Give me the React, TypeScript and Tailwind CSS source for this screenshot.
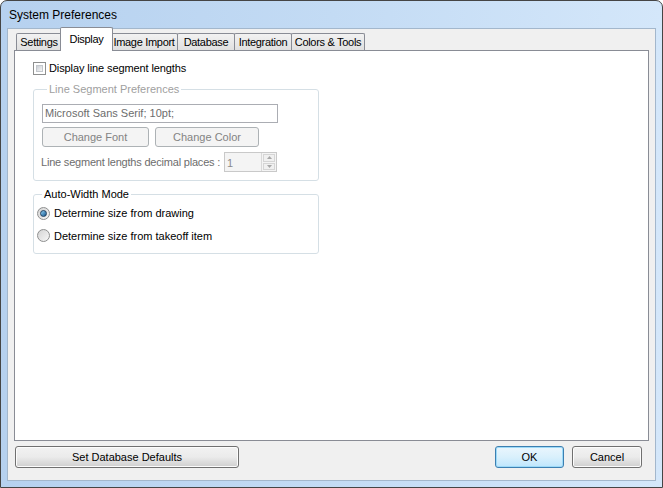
import React from 'react';

const font = { fontFamily: '"Liberation Sans", Arial, sans-serif' };

const tabs = [
  { label: 'Settings', w: 'w-[46px]' },
  { label: 'Display', w: 'w-[47px]' },
  { label: 'Image Import', w: 'w-[68px]' },
  { label: 'Database', w: 'w-[58px]' },
  { label: 'Integration', w: 'w-[58px]' },
  { label: 'Colors & Tools', w: 'w-[74px]' },
];

function Checkbox() {
  return (
    <span className="w-[13px] h-[13px] border border-[#8e8f8f] bg-white p-[2px] shrink-0">
      <span className="block w-full h-full bg-gradient-to-br from-[#cbcfd5] to-[#f6f6f6] border border-[#c3c7cc]" />
    </span>
  );
}

function Radio({ checked }: { checked?: boolean }) {
  return (
    <span className="w-[13px] h-[13px] rounded-full border border-[#8e8f8f] bg-gradient-to-br from-[#d4d4d4] to-[#f7f7f7] flex items-center justify-center shrink-0">
      {checked && (
        <span className="w-[7px] h-[7px] rounded-full bg-gradient-to-br from-[#8fd1f5] to-[#14598f] border border-[#1f3f5f]" />
      )}
    </span>
  );
}

function WinButton({
  children,
  className = '',
  isDefault = false,
  disabled = false,
}: {
  children: React.ReactNode;
  className?: string;
  isDefault?: boolean;
  disabled?: boolean;
}) {
  return (
    <div
      className={`flex items-center justify-center rounded-[3px] border ${
        disabled
          ? 'border-[#adb2b5] bg-[#f4f4f4] text-[#838383]'
          : isDefault
          ? 'border-[#3c7fb1] bg-gradient-to-b from-[#eaf6fd] via-[#d9f0fc] to-[#bee6fd] text-black shadow-[inset_0_0_0_1px_#9ddaf8]'
          : 'border-[#707070] bg-gradient-to-b from-[#f2f2f2] via-[#ebebeb] to-[#cfcfcf] text-black shadow-[inset_0_0_0_1px_#fcfcfc]'
      } ${className}`}
    >
      {children}
    </div>
  );
}

export default function App() {
  return (
    <div
      className="w-[663px] h-[488px] flex flex-col rounded-t-[7px] border border-[#454545] bg-gradient-to-r from-[#b6d1ef] via-[#c3dbf4] to-[#d4e7fa] text-[11px] text-black overflow-hidden"
      style={font}
    >
      {/* title bar */}
      <div className="h-[27px] flex items-center pl-[8px] text-[12px] text-black shrink-0">
        System Preferences
      </div>

      <div className="flex-1 flex flex-col px-[6px] pb-[6px]">
        {/* client area */}
        <div className="flex-1 flex flex-col bg-[#f0f0f0] border border-[#a3b7cc] pt-[2px] pl-[6px] pr-[6px]">
          {/* tab strip */}
          <div className="flex items-end h-[19px] pl-[2px] relative z-10 tracking-[-0.3px]">
            {tabs.map((t) =>
              t.label === 'Display' ? (
                <div
                  key={t.label}
                  className={`${t.w} h-[20px] -mb-px -mx-[2px] px-[2px] box-content bg-white border border-b-0 border-[#898c95] rounded-t-[2px] flex items-start pt-[3px] justify-center relative z-10`}
                >
                  {t.label}
                </div>
              ) : (
                <div
                  key={t.label}
                  className={`${t.w} h-[17px] bg-gradient-to-b from-[#f2f2f2] to-[#e0e0e0] border border-b-0 border-[#898c95] rounded-t-[2px] flex items-center justify-center -ml-px first:ml-0`}
                >
                  {t.label}
                </div>
              )
            )}
          </div>

          {/* tab panel */}
          <div className="h-[391px] bg-white border border-[#898c95] pl-[18px] pt-[11px]">
            <div className="flex items-center gap-[3px] h-[13px] tracking-[-0.1px]">
              <Checkbox />
              <span>Display line segment lengths</span>
            </div>

            <fieldset className="w-[286px] h-[98px] mt-[8px] border border-[#d5dfe5] rounded-[3px] pl-[8px]">
              <legend className="ml-[5px] px-[2px] text-[#a0a0a0] leading-[13px]">
                Line Segment Preferences
              </legend>
              <div className="w-[236px] h-[19px] mt-[8px] border border-[#abadb3] bg-white flex items-center pl-[2px] text-[#6d6d6d]">
                Microsoft Sans Serif; 10pt;
              </div>
              <div className="flex gap-[6px] mt-[4px]">
                <WinButton disabled className="w-[107px] h-[20px]">
                  Change Font
                </WinButton>
                <WinButton disabled className="w-[104px] h-[20px]">
                  Change Color
                </WinButton>
              </div>
              <div className="flex items-center mt-[5px] -ml-[1px]">
                <span className="text-[#6d6d6d] whitespace-nowrap tracking-[-0.2px] w-[183px]">
                  Line segment lengths decimal places :
                </span>
                <div className="w-[53px] h-[20px] border border-[#c9c9c9] bg-[#f4f4f4] flex">
                  <span className="flex-1 pl-[2px] pt-[2px] text-[#8a8a8a]">1</span>
                  <div className="w-[15px] flex flex-col border-l border-[#d9d9d9] p-px gap-px">
                    <div className="flex-1 border border-[#d5d5d5] bg-[#f0f0f0] flex items-center justify-center">
                      <svg width="5" height="3" viewBox="0 0 5 3">
                        <path d="M0 3 L2.5 0 L5 3 Z" fill="#a7a7a7" />
                      </svg>
                    </div>
                    <div className="flex-1 border border-[#d5d5d5] bg-[#f0f0f0] flex items-center justify-center">
                      <svg width="5" height="3" viewBox="0 0 5 3">
                        <path d="M0 0 L2.5 3 L5 0 Z" fill="#a7a7a7" />
                      </svg>
                    </div>
                  </div>
                </div>
              </div>
            </fieldset>

            <fieldset className="w-[286px] h-[66px] mt-[7px] border border-[#d5dfe5] rounded-[3px] pl-[3px]">
              <legend className="ml-[5px] px-[2px] leading-[13px]">Auto-Width Mode</legend>
              <div className="flex items-center gap-[4px] mt-[4px]">
                <Radio checked />
                <span>Determine size from drawing</span>
              </div>
              <div className="flex items-center gap-[4px] mt-[6px]">
                <Radio />
                <span>Determine size from takeoff item</span>
              </div>
            </fieldset>
          </div>

          {/* bottom buttons */}
          <div className="flex items-center mt-[5px] pl-[1px] pr-[7px]">
            <WinButton className="w-[224px] h-[22px]">Set Database Defaults</WinButton>
            <div className="ml-auto flex gap-[8px]">
              <WinButton isDefault className="w-[69px] h-[22px]">
                OK
              </WinButton>
              <WinButton className="w-[70px] h-[22px]">Cancel</WinButton>
            </div>
          </div>
        </div>
      </div>
    </div>
  );
}
